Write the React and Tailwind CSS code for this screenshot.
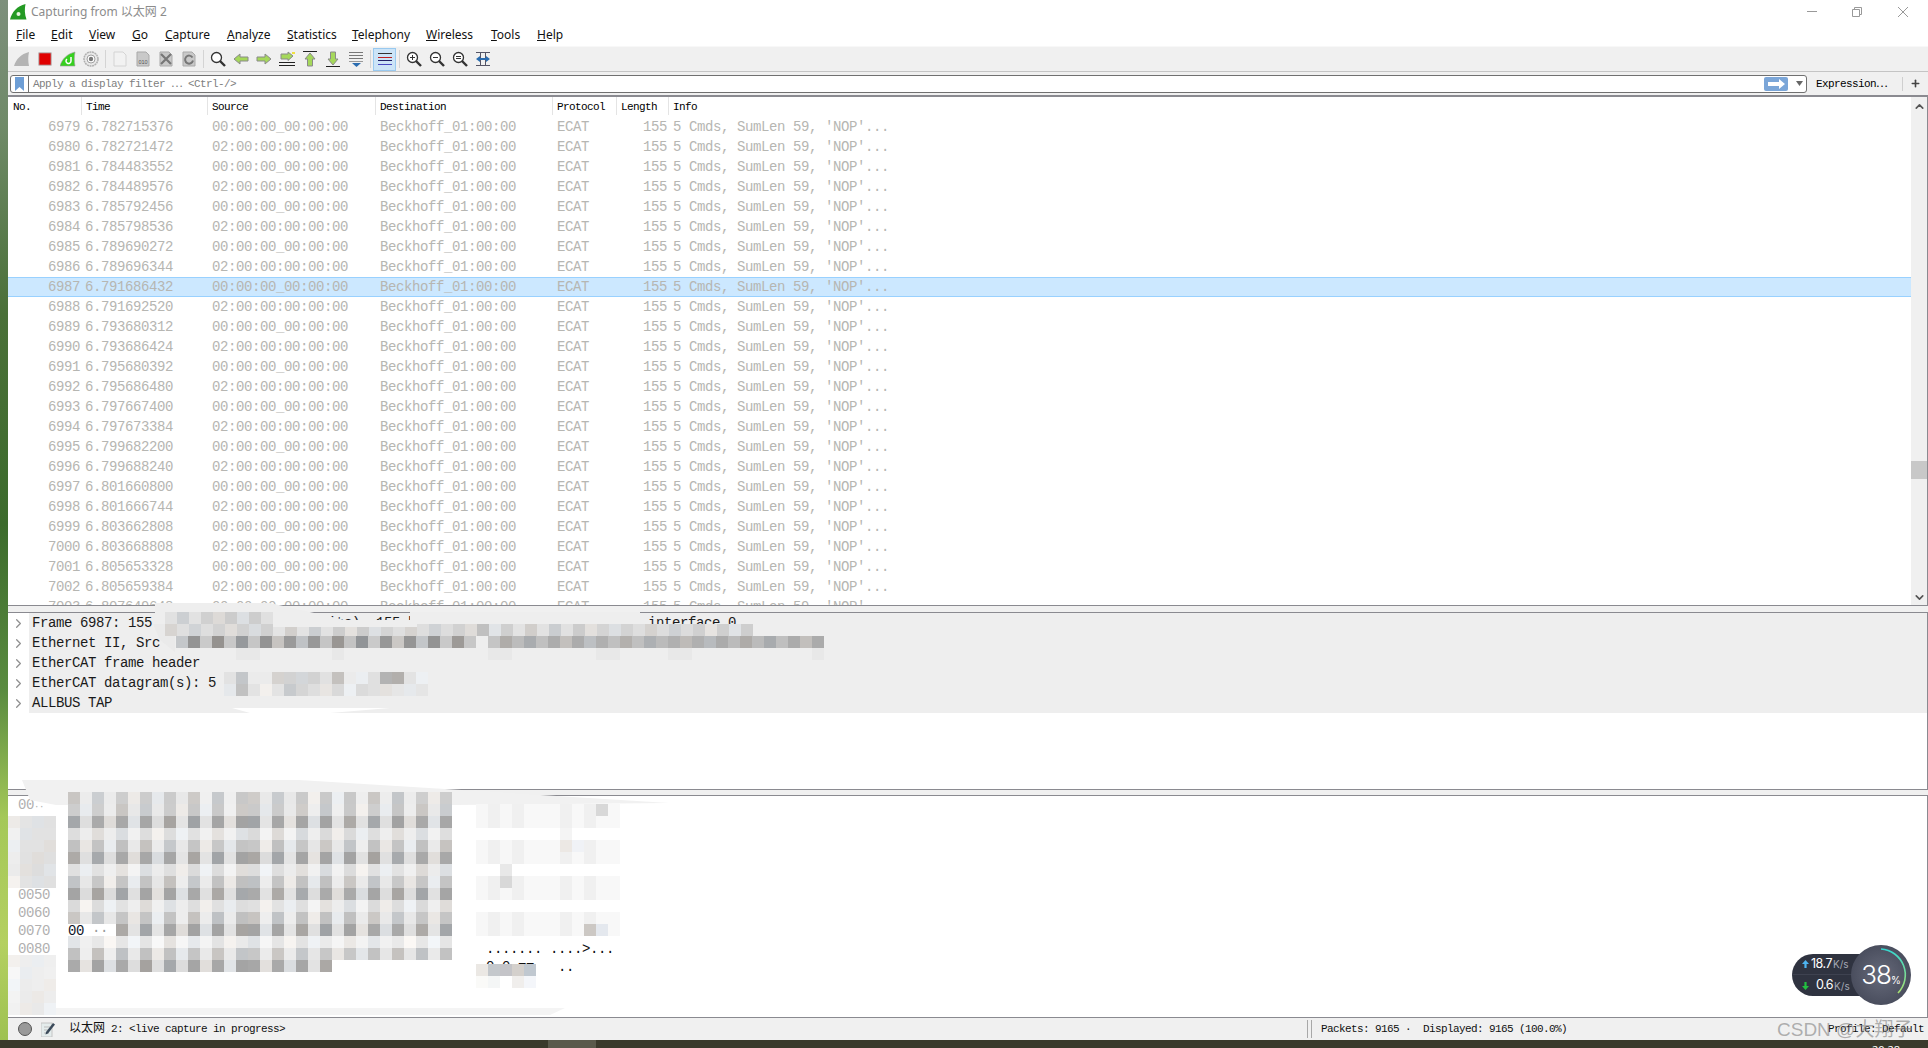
import React from 'react';
import { ChevronRight, ChevronUp, ChevronDown, Plus } from 'lucide-react';

const sim = "font-['Liberation_Mono','Noto_Sans_CJK_SC',monospace] text-[11px] tracking-[-0.6px]";
const mono = "font-['Liberation_Mono','Noto_Sans_CJK_SC',monospace] text-[14px] tracking-[-0.4px]";

const times = [
  '6.782715376', '6.782721472', '6.784483552', '6.784489576', '6.785792456',
  '6.785798536', '6.789690272', '6.789696344', '6.791686432', '6.791692520',
  '6.793680312', '6.793686424', '6.795680392', '6.795686480', '6.797667400',
  '6.797673384', '6.799682200', '6.799688240', '6.801660800', '6.801666744',
  '6.803662808', '6.803668808', '6.805653328', '6.805659384', '6.807649648',
];

const menus = [
  ['F', 'ile', 19], ['E', 'dit', 22], ['V', 'iew', 27], ['G', 'o', 17], ['C', 'apture', 46],
  ['A', 'nalyze', 44], ['S', 'tatistics', 49], ['T', 'elephony', 58], ['W', 'ireless', 49],
  ['T', 'ools', 30], ['H', 'elp', 27],
];

// petite variation pour les pavés floutés
const jitter = (r, c) => ((r * 7 + c * 13 + (r * c) % 5) % 9) - 4;
const tint = (v, r, c) => {
  const j = jitter(r, c);
  const t = (r + c) % 5 === 0 ? 3 : (r + c) % 5 === 2 ? -3 : 0;
  return `rgb(${v + j + t},${v + j},${v + j - t})`;
};

const Mosaic = ({ className, rows }) => (
  <div className={`absolute ${className}`}>
    {rows.map((row, r) => (
      <div key={r} className="flex h-3">
        {row.map((c, i) => (
          <div key={i} className="w-3 h-3" style={{ background: c || 'transparent' }} />
        ))}
      </div>
    ))}
  </div>
);

const hexKinds = ['a', 'a', 'd', 'l', 'm', 'd', 'l', 'm', 'd', 'l', 'm', 'd', 'v', 'm', 'd'];
const hexVals = { a: [202, 236], d: [166, 224], m: [196, 234], l: [222, 240], v: [230, 244] };
const hexRows = hexKinds.map((k, r) =>
  Array.from({ length: r === 14 ? 22 : 32 }, (_, c) => {
    if (r === 11 && c < 4) return null;
    // la trame s'inverse vers le milieu de la ligne
    const strong = c <= 14 ? c % 2 === 0 : c % 2 === 1;
    return tint(hexVals[k][strong ? 0 : 1], r, c);
  })
);

const asciiCols = [247, 240, 247, 240, 248, 248, 248, 240, 248, 240, 248, 248];
const asciiRow = over => asciiCols.map((v, c) => over[c] || `rgb(${v},${v},${v})`);
const asciiRows = [
  asciiRow({ 10: '#d8d8d8' }),
  asciiRow({}),
  asciiCols.map((v, c) => (c === 7 ? '#f4f4f4' : null)),
  asciiRow({ 7: '#ece8e4', 8: '#f0f2f6' }),
  asciiRow({}),
  asciiCols.map((v, c) => (c === 2 ? '#e8e8e8' : null)),
  asciiRow({ 2: '#d8d8d8' }),
  asciiRow({}),
  asciiCols.map(() => null),
  asciiRow({}),
  asciiRow({ 9: '#ccc8c4', 10: '#e4e8ee' }),
];

const etherRow = Array.from({ length: 54 }, (_, c) => {
  if (c === 25) return '#eeeeee';
  if (c >= 27) return tint(c % 2 ? 172 : 190, 3, c);
  return tint(c % 2 ? 150 : 198, 2, c);
});
const frameTop = Array.from({ length: 9 }, (_, c) => tint(c % 2 ? 208 : 222, 1, c));
const frameLow = Array.from({ length: 49 }, (_, c) =>
  c === 26 ? '#c0c0c0' : tint(c % 2 ? 224 : 208, 5, c)
);
const etherBelow = Array.from({ length: 55 }, (_, c) =>
  [5, 6, 13, 26, 27, 35, 36, 41, 42, 53].includes(c) ? '#e8e8e8' : null
);
const dgTop = [224, 200, 232, 236, 206, 206, 214, 214, 224, 196, 238, 236, 226, 176, 176, 228, 236].map((v, c) => tint(v, 6, c));
const dgLow = [232, 196, 224, 236, 226, 200, 214, 226, 232, 214, 236, 218, 226, 226, 234, 236, 226].map((v, c) => tint(v, 7, c));

const Sep = ({ w = 6 }) => (
  <div className="h-full flex items-center justify-center" style={{ width: w }}>
    <div className="w-px h-[18px] bg-[#d4d4d4]" />
  </div>
);

const Btn = ({ children, active }) => (
  <div className={`w-[23px] h-[23px] flex items-center justify-center ${active ? 'bg-[#cce4f7] border border-[#99c9ef]' : ''}`}>
    {children}
  </div>
);

const Ic = ({ children, size = 16 }) => (
  <svg width={size} height={size} viewBox="0 0 16 16" fill="none">{children}</svg>
);

const Page = ({ fill = '#c9c9c9', stroke = '#a9a9a9', children }) => (
  <Ic>
    <path d="M2 1h9l3 3v11H2z" fill={fill} stroke={stroke} />
    {children}
  </Ic>
);

const Lens = ({ children }) => (
  <Ic>
    <path d="M10 10l5 5" stroke="#333" strokeWidth="2.4" />
    <circle cx="6.5" cy="6.5" r="5" fill="#fff" stroke="#333" strokeWidth="1.3" />
    {children}
  </Ic>
);

const Arrow = ({ points }) => (
  <polygon points={points} fill="#a5d85a" stroke="#8a8a8a" strokeWidth="1" />
);

const Logo = () => (
  <svg width="17" height="16" viewBox="0 0 17 16">
    <path d="M0 15.5C2 8 7 2 15.5 0c-1 5-1 10 1 15.5z" fill="#249a24" />
    <circle cx="8.5" cy="10" r="2" fill="#e6f5e0" />
  </svg>
);

const Toolbar = () => (
  <div className="h-[26px] bg-[#f0f0f0] border-t border-[#f8f8f8] border-b border-b-[#c4c4c4] pl-[2px] flex items-center">
    <Btn><Ic><path d="M0 15C2 8 7 3 15 1c-1 5-1 9 0 14z" fill="#b4b4b4" /></Ic></Btn>
    <Btn><Ic size={14}><rect x="1" y="1" width="14" height="14" fill="#e00000" stroke="#a8a8a8" /></Ic></Btn>
    <Btn>
      <Ic>
        <path d="M0 15C2 8 7 3 15 1c-1 5-1 9 0 14z" fill="#35d01e" stroke="#9a9a9a" strokeWidth=".6" />
        <path d="M11 6v4a2.5 2.5 0 1 1-4-2" stroke="#fff" strokeWidth="1.5" />
      </Ic>
    </Btn>
    <Btn>
      <Ic>
        <circle cx="8" cy="8" r="7" fill="#e8e8e8" stroke="#b0b0b0" strokeWidth="1.5" strokeDasharray="2 .6" />
        <circle cx="8" cy="8" r="4" fill="#fff" stroke="#a0a0a0" />
        <circle cx="8" cy="8" r="2.2" fill="#7a7a7a" />
      </Ic>
    </Btn>
    <Sep />
    <Btn><Page fill="#f2f2f2" stroke="#d4d4d4" /></Btn>
    <Btn>
      <Page>
        <text x="8" y="12.5" textAnchor="middle" fontSize="5.5" fill="#555" fontFamily="Liberation Sans">010</text>
      </Page>
    </Btn>
    <Btn><Page><path d="M3 3l10 10M13 3L3 13" stroke="#777" strokeWidth="2.2" /></Page></Btn>
    <Btn><Page><path d="M11.5 6.5a4 4 0 1 0 .5 3" stroke="#777" strokeWidth="2" /></Page></Btn>
    <Sep />
    <Btn><Lens /></Btn>
    <Btn><Ic><Arrow points="1,8 7,3 7,6 15,6 15,10 7,10 7,13" /></Ic></Btn>
    <Btn><Ic><Arrow points="15,8 9,3 9,6 1,6 1,10 9,10 9,13" /></Ic></Btn>
    <Btn>
      <Ic>
        <path d="M0 11.5h16M0 14.5h16" stroke="#222" />
        <Arrow points="14,5 9,1 9,3 2,3 2,8 9,8 9,9.5" />
        <rect x="13" y="1" width="3" height="2" fill="#f0e040" />
      </Ic>
    </Btn>
    <Btn><Ic><path d="M1 .5h14" stroke="#222" /><Arrow points="8,2 13,8 10.5,8 10.5,15 5.5,15 5.5,8 3,8" /></Ic></Btn>
    <Btn><Ic><path d="M1 15.5h14" stroke="#222" /><Arrow points="8,14 13,8 10.5,8 10.5,1 5.5,1 5.5,8 3,8" /></Ic></Btn>
    <Btn>
      <Ic>
        <path d="M1 1.5h14M1 4.5h14M1 7.5h14" stroke="#777" />
        <path d="M1 10.5h14" stroke="#999" />
        <polygon points="4,12 13,12 8.5,16" fill="#2a6cb0" />
      </Ic>
    </Btn>
    <Sep />
    <Btn active>
      <Ic>
        <path d="M1 2.5h14" stroke="#333" />
        <path d="M1 6.5h14" stroke="#c02020" />
        <path d="M1 9.5h14" stroke="#222266" />
        <path d="M1 13.5h14" stroke="#4848c0" />
      </Ic>
    </Btn>
    <Sep />
    <Btn><Lens><path d="M4 6.5h5M6.5 4v5" stroke="#333" /></Lens></Btn>
    <Btn><Lens><path d="M4 6.5h5" stroke="#333" /></Lens></Btn>
    <Btn><Lens><path d="M4 5.5h5M4 7.5h5" stroke="#333" /></Lens></Btn>
    <Btn>
      <Ic>
        <path d="M1 1.5h14M1 14.5h14M5.5 1v14M10.5 1v14" stroke="#556" />
        <path d="M1 8l4-3v6zM15 8l-4-3v6z" fill="#2a6cb0" />
        <rect x="4" y="7" width="8" height="2" fill="#2a6cb0" />
      </Ic>
    </Btn>
  </div>
);

const FilterBar = () => (
  <div className="h-[23px] bg-[#f0f0f0] flex items-center pl-[2px]">
    <div className="w-[1797px] h-[18px] bg-white border border-[#707070] rounded-[3px] flex items-center">
      <div className="w-[18px] h-full border-r border-[#707070] flex items-center justify-center">
        <svg width="9" height="14" viewBox="0 0 9 14"><path d="M0 0h9v14L4.5 10 0 14z" fill="#6d9ed6" /></svg>
      </div>
      <span className={`${sim} text-[#808080] ml-[4px] mt-[2px] flex-1 whitespace-pre`}>Apply a display filter ⋯ {'<Ctrl-/>'}</span>
      <div className="w-[24px] h-[14px] bg-[#7ba6d8] rounded-[2px] flex items-center justify-center">
        <svg width="17" height="10" viewBox="0 0 17 10"><path d="M0 3h11V0l6 5-6 5V7H0z" fill="#fff" /></svg>
      </div>
      <svg className="ml-[8px] mr-[3px]" width="7" height="5" viewBox="0 0 7 5"><path d="M0 0h7L3.5 5z" fill="#666" /></svg>
    </div>
    <span className={`${sim} text-black ml-[9px] mt-[2px] w-[86px]`}>Expression⋯</span>
    <div className="w-px h-[14px] bg-[#cfcfcf]" />
    <Plus size={11} strokeWidth={3.5} className="ml-[7px] text-[#444]" />
  </div>
);

const Row = ({ no, time, selected }) => {
  const src = no % 2 ? '00:00:00_00:00:00' : '02:00:00:00:00:00';
  return (
    <div className={`h-5 flex items-center text-[#b6b6b2] whitespace-pre ${mono} ${selected ? 'bg-[#cce8ff] border-y border-[#99d1ff]' : ''}`}>
      <div className="w-[73px] text-right pr-[1px]">{no}</div>
      <div className="w-[127px] pl-[4px]">{time}</div>
      <div className="w-[168px] pl-[4px]">{src}</div>
      <div className="w-[177px] pl-[4px]">Beckhoff_01:00:00</div>
      <div className="w-[64px] pl-[4px]">ECAT</div>
      <div className="w-[52px] text-right pr-[2px]">155</div>
      <div className="flex-1 pl-[4px]">5 Cmds, SumLen 59, 'NOP'...</div>
    </div>
  );
};

const heads = [
  ['No.', 74, 'pl-[5px]'], ['Time', 126, 'pl-[4px]'], ['Source', 168, 'pl-[4px]'],
  ['Destination', 177, 'pl-[4px]'], ['Protocol', 64, 'pl-[4px]'], ['Length', 52, 'pl-[4px]'],
];

const PacketList = () => (
  <div className="h-[511px] flex border-t-2 border-b border-r border-[#8a8a90] border-r-[#8a8a90] bg-white overflow-hidden">
    <div className="flex-1 min-w-0 overflow-hidden">
      <div className={`h-[18px] flex items-center text-black whitespace-pre ${sim} mb-[2px]`}>
        {heads.map(([t, w, p]) => (
          <div key={t} className={`h-full flex items-center pt-[2px] border-r border-[#e4e4e4] ${p}`} style={{ width: w }}>{t}</div>
        ))}
        <div className="pl-[4px] pt-[2px]">Info</div>
      </div>
      {times.map((t, i) => (
        <Row key={t} no={6979 + i} time={t} selected={i === 8} />
      ))}
    </div>
    <div className="w-4 bg-[#f0f0f0] flex flex-col items-center relative">
      <ChevronUp size={13} strokeWidth={3} className="mt-[3px] text-[#555]" />
      <div className="w-full h-[18px] bg-[#c8c8c8] mt-[348px]" />
      <div className="flex-1" />
      <ChevronDown size={13} strokeWidth={3} className="mb-[1px] text-[#555]" />
    </div>
  </div>
);

const details = [
  'Frame 6987: 155 bytes on wire (1240 bits), 155 bytes captured (1240 bits) on interface 0',
  'Ethernet II, Src',
  'EtherCAT frame header',
  'EtherCAT datagram(s): 5',
  'ALLBUS TAP',
];

const DetailsPane = () => (
  <div className="h-[178px] bg-white border-y border-r border-[#8a8a90]">
    {details.map(d => (
      <div key={d} className={`h-5 flex items-center text-[#1a1a1a] whitespace-pre ${mono}`}>
        <div className="w-[21px] h-full flex items-center justify-center">
          <ChevronRight size={15} strokeWidth={2} className="text-[#909090]" />
        </div>
        <div className="flex-1 h-full bg-[#eeeeee] pl-[3px] flex items-center">{d}</div>
      </div>
    ))}
  </div>
);

const byteLines = [
  { off: '00', tiny: '··' }, {}, {}, {}, {},
  { off: '0050' }, { off: '0060' },
  { off: '0070', hex: '00', hexTiny: ' ··' },
  { off: '0080', ascii: '....... ....>...' },
  { ascii: '0.0.==   ..' },
];

const BytesPane = () => (
  <div className="h-[223px] bg-white border-y border-r border-[#8a8a90]">
    {byteLines.map((l, i) => (
      <div key={i} className={`h-[18px] flex items-center whitespace-pre ${mono}`}>
        <div className="w-[10px]" />
        <div className="w-[50px] text-[#b0b0b0]">
          {l.off}
          {l.tiny && <span className="text-[9px]">{l.tiny}</span>}
        </div>
        <div className="w-[418px] text-[#10182a]">
          {l.hex}
          {l.hexTiny && <span className="text-[#999]">{l.hexTiny}</span>}
        </div>
        <div className="text-[#111]">{l.ascii}</div>
      </div>
    ))}
  </div>
);

const StatusBar = () => (
  <div className={`h-[22px] bg-[#f0f0f0] flex items-center whitespace-pre text-[#111] ${sim}`}>
    <div className="w-[14px] h-[14px] rounded-full bg-[#9a9a9a] border border-[#555] ml-[10px]" />
    <svg className="ml-[9px]" width="14" height="15" viewBox="0 0 14 15">
      <rect x="0" y="1" width="11" height="14" fill="#e4ecec" stroke="#c4c4c4" />
      <path d="M3 5h6M3 8h5M3 11h5" stroke="#bbb" />
      <path d="M5 10l7-9 2 1.5-7 9-2.5 1z" fill="#3b4a5a" />
    </svg>
    <span className="ml-[14px]"><span className="text-[12px] tracking-normal">以太网</span> 2: {'<live capture in progress>'}</span>
    <div className="ml-auto flex items-center">
      <div className="w-[5px] h-[18px] border-x border-[#a8a8a8]" />
      <span className="ml-[9px] w-[507px]">Packets: 9165 ·  Displayed: 9165 (100.0%)</span>
      <span className="w-[100px]">Profile: Default</span>
    </div>
  </div>
);

const NetWidget = () => (
  <div className="absolute left-[1792px] top-[945px] w-[120px] h-[60px] font-['Inter',sans-serif]">
    <div className="absolute left-0 top-[9px] w-[90px] h-[42px] rounded-l-[21px] bg-[#2f3340] text-white">
      <div className="h-[21px] flex items-center pl-[10px] border-b border-[#3e4250]">
        <svg className="mr-[2px]" width="7" height="8" viewBox="0 0 7 8"><path d="M3.5 0L7 4H4.6v4H2.4V4H0z" fill="#4db4f0" /></svg>
        <span className="text-[12.5px] tracking-[-0.5px] leading-none">18.7</span>
        <span className="text-[10px] text-[#a4a8b4] leading-none ml-[1px]">K/s</span>
      </div>
      <div className="h-[21px] flex items-center pl-[10px]">
        <svg className="mr-[7px]" width="7" height="8" viewBox="0 0 7 8"><path d="M3.5 8L7 4H4.6V0H2.4v4H0z" fill="#22c040" /></svg>
        <span className="text-[12.5px] tracking-[-0.5px] leading-none">0.6</span>
        <span className="text-[10px] text-[#a4a8b4] leading-none ml-[1px]">K/s</span>
      </div>
    </div>
    <div className="absolute left-[59px] top-0 w-[60px] h-[60px] rounded-full bg-[radial-gradient(circle,#666a7a,#3e4252)] flex items-center justify-center text-white">
      <span className="text-[26px] font-light tracking-[-1px] leading-none">38</span>
      <span className="text-[10px] mt-[10px]">%</span>
      <svg className="absolute inset-0" width="60" height="60" viewBox="0 0 60 60" fill="none">
        <defs>
          <linearGradient id="arc" x1="0" y1="0" x2="0" y2="1">
            <stop offset="0" stopColor="#35d8d0" />
            <stop offset="1" stopColor="#a8e070" />
          </linearGradient>
        </defs>
        <path d="M30 4a26 26 0 0 1 17 44" stroke="url(#arc)" strokeWidth="1.6" />
      </svg>
    </div>
  </div>
);

export default function App() {
  return (
    <div className="relative w-[1928px] h-[1048px] overflow-hidden bg-[linear-gradient(180deg,#7d8f7c_0%,#6f8a68_12%,#4a7038_30%,#3c6b2c_50%,#5a8c40_66%,#a4c858_78%,#b4d060_90%,#9cc050_100%)]">
      <div className="ml-[8px] w-[1920px] h-[1040px] flex flex-col bg-white">
        {/* Titre */}
        <div className="h-[23px] flex items-center relative font-['Noto_Sans','Noto_Sans_CJK_SC',sans-serif] text-[12px] text-[#8c8c8c]">
          <div className="ml-[2px] mr-[4px]"><Logo /></div>
          <span>Capturing from 以太网 2</span>
          <div className="ml-auto flex items-center text-[#8a8a8a]">
            <div className="w-[10px] h-px bg-[#999]" />
            <svg className="ml-[35px]" width="10" height="10" viewBox="0 0 10 10" fill="none" stroke="#999"><path d="M.5 2.5h7v7h-7zM2.5 2.5v-2h7v7h-2" /></svg>
            <svg className="ml-[36px] mr-[20px]" width="10" height="10" viewBox="0 0 10 10" stroke="#999"><path d="M0 0l10 10M10 0L0 10" /></svg>
          </div>
        </div>
        {/* Menu */}
        <div className="h-[23px] flex items-center pl-[8px] gap-4 font-['Noto_Sans',sans-serif] text-[12px] text-[#111]">
          {menus.map(([u, rest, w]) => (
            <span key={u + rest} className="whitespace-nowrap" style={{ width: w }}>
              <span className="underline">{u}</span>{rest}
            </span>
          ))}
        </div>
        <Toolbar />
        <FilterBar />
        <PacketList />
        <div className="h-[6px] bg-[#f0f0f0]" />
        <DetailsPane />
        <div className="h-[5px] bg-[#f0f0f0]" />
        <BytesPane />
        <StatusBar />
      </div>

      {/* Barre des tâches */}
      <div className="relative ml-0 h-[8px] bg-[#3a3a2c] overflow-hidden">
        <div className="absolute left-[548px] top-0 w-[48px] h-full bg-[#5a5a4c]" />
        <span className="absolute left-[1872px] top-[4px] text-[11px] leading-none text-white font-['Noto_Sans',sans-serif]">20:28</span>
      </div>

      {/* Zones floutées du panneau de détails */}
      <svg className="absolute left-0 top-0 pointer-events-none" width="1928" height="1048" fill="none">
        <polygon points="155,603 270,603 345,620 410,620 410,612 640,612 640,628 155,628" fill="#eeeeee" />
        <polygon points="153,624 175,624 175,652 160,640" fill="#eaeaea" />
        <polygon points="22,780 299,780 669,803 452,805 56,805 30,800" fill="#f1f1f1" />
        <polygon points="8,1008 565,1008 550,1015 8,1015" fill="#f4f4f4" />
        <polygon points="232,708 390,708 330,713 250,713" fill="#ffffff" />
      </svg>
      <Mosaic className="left-[165px] top-[612px]" rows={[frameTop]} />
      <Mosaic className="left-[165px] top-[624px]" rows={[frameLow.slice(0, 9)]} />
      <Mosaic className="left-[273px] top-[627px]" rows={[frameLow.slice(9, 21)]} />
      <Mosaic className="left-[417px] top-[624px]" rows={[frameLow.slice(21)]} />
      <Mosaic className="left-[176px] top-[636px]" rows={[etherRow]} />
      <Mosaic className="left-[176px] top-[648px]" rows={[etherBelow]} />
      <Mosaic className="left-[224px] top-[672px]" rows={[dgTop, [...dgLow.slice(0, 17)]]} />

      {/* Zones floutées du panneau d'octets */}
      <Mosaic className="left-[68px] top-[792px]" rows={hexRows} />
      <Mosaic className="left-[476px] top-[804px]" rows={asciiRows} />
      <Mosaic
        className="left-[476px] top-[964px]"
        rows={[
          ['#ebe8e4', '#c4c8cc', '#c4c4c8', '#d4d0cc', '#c0c8d0'],
          ['#fafaf8', '#f4f6f6', null, '#f0eeec', '#f4f6fa'],
        ]}
      />
      <Mosaic
        className="left-[8px] top-[816px]"
        rows={[0, 1, 2, 3, 4, 5].map(r => [238, 228, 222, 226].map((v, c) => tint(v, r, c)))}
      />
      <Mosaic
        className="left-[8px] top-[955px]"
        rows={[0, 1, 2, 3, 4].map(r => [244, 238, 234, 240].map((v, c) => tint(v, r, c)))}
      />

      <NetWidget />

      <span className="absolute left-[1777px] top-[1016px] text-[19px] text-[#808080]/60 font-['Liberation_Sans','Noto_Sans_CJK_SC',sans-serif]">CSDN @大翔子子</span>
    </div>
  );
}
